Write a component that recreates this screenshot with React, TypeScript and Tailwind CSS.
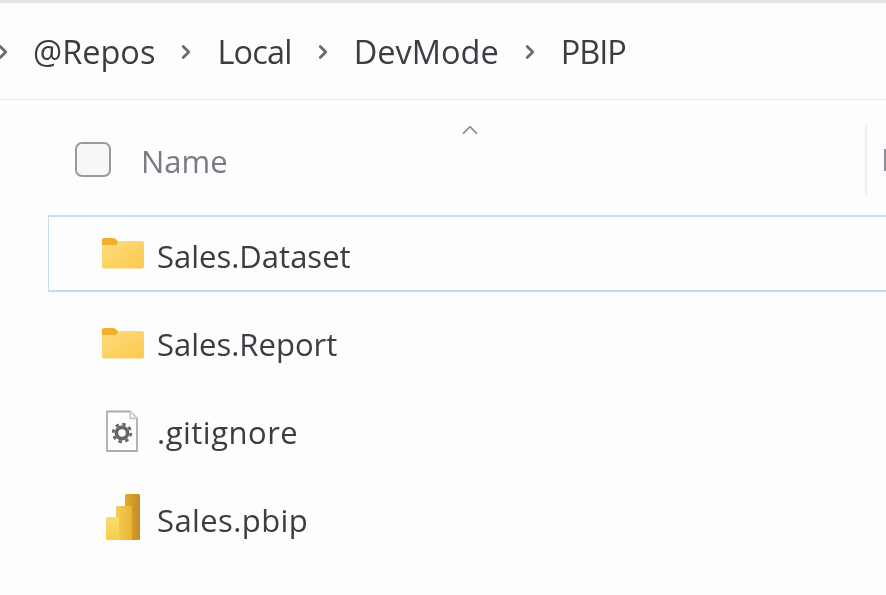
import { ChevronRight, ChevronUp } from "lucide-react";

const crumbs = [
  { name: "@Repos", fit: "" },
  { name: "Local", fit: "tracking-[-0.8px]" },
  { name: "DevMode", fit: "" },
  { name: "PBIP", fit: "tracking-[-1px]" },
];

function FolderIcon() {
  return (
    <svg width="44" height="34" viewBox="0 0 44 34" className="shrink-0">
      <defs>
        <linearGradient id="folderFill" x1="0" y1="0" x2="1" y2="1">
          <stop offset="0" stopColor="#fddc7c" />
          <stop offset="1" stopColor="#fbc94e" />
        </linearGradient>
      </defs>
      <path d="M1 3 Q1 1 3 1 H13 L17 4 V9 H1 Z" fill="#efb02c" />
      <path d="M1 8 H15 L18 4 H41 Q43 4 43 6 V29.5 Q43 31.5 41 31.5 H3 Q1 31.5 1 29.5 Z" fill="url(#folderFill)" />
    </svg>
  );
}

function GearFileIcon() {
  return (
    <svg width="36" height="44" viewBox="0 0 36 44" className="shrink-0">
      <path d="M3 1.5 H26 L33 8.5 V41 H3 Z" fill="#fdfdfd" stroke="#a9adb2" strokeWidth="1.8" strokeLinejoin="round" />
      <path d="M26 1.5 V8.5 H33" fill="#f2f2f3" stroke="#c2c5c8" strokeWidth="1.4" />
      <circle cx="18" cy="23" r="5.6" fill="none" stroke="#62666b" strokeWidth="3.6" />
      <circle cx="18" cy="23" r="8.8" fill="none" stroke="#62666b" strokeWidth="2.8" strokeDasharray="3.4 3.51" />
    </svg>
  );
}

function PbipIcon() {
  return (
    <svg width="36" height="48" viewBox="0 0 36 48" className="mb-[6px] shrink-0">
      <defs>
        <linearGradient id="barA" x1="0" y1="0" x2="0" y2="1">
          <stop offset="0" stopColor="#f9dc70" />
          <stop offset="1" stopColor="#f7cd4a" />
        </linearGradient>
        <linearGradient id="barB" x1="0" y1="0" x2="1" y2="0">
          <stop offset="0" stopColor="#f3cb55" />
          <stop offset="1" stopColor="#eab535" />
        </linearGradient>
        <linearGradient id="barC" x1="0" y1="0" x2="1" y2="0">
          <stop offset="0" stopColor="#e7ab22" />
          <stop offset="1" stopColor="#c08a28" />
        </linearGradient>
      </defs>
      <rect x="20" y="1" width="15" height="46" rx="1.5" fill="url(#barC)" />
      <rect x="11" y="13" width="16" height="34" rx="1.5" fill="url(#barB)" />
      <rect x="1" y="24" width="13" height="23" rx="1.5" fill="url(#barA)" />
    </svg>
  );
}

const rows = [
  { name: "Sales.Report", icon: <FolderIcon />, iconBox: "pl-[101px]", label: "ml-[12px]" },
  { name: ".gitignore", icon: <GearFileIcon />, iconBox: "pl-[104px]", label: "ml-[17px] tracking-[0.5px]" },
  { name: "Sales.pbip", icon: <PbipIcon />, iconBox: "pl-[105px]", label: "ml-[16px] tracking-[0.4px]" },
];

export default function App() {
  return (
    <div className="h-[595px] w-[886px] overflow-hidden bg-[#fdfdfd] font-['Open_Sans',sans-serif] text-[#3a3d41] blur-[0.5px]">
      <div className="h-[3px] bg-[#e4e4e6]" />
      <div className="flex h-[97px] items-center border-b border-b-[#e7e7e9] pt-[2px] text-[32.5px]">
        <ChevronRight size={22} strokeWidth={3} className="ml-[-8px] mr-[19px] text-[#666a6e]" />
        {crumbs.map((crumb, i) => (
          <div key={crumb.name} className="flex items-center">
            {i > 0 && <ChevronRight size={22} strokeWidth={3} className="mx-[20px] text-[#666a6e]" />}
            <span className={crumb.fit}>{crumb.name}</span>
          </div>
        ))}
      </div>

      <div className="flex h-[115px] items-start">
        <div className="relative flex h-[96px] flex-1 items-center pl-[75px] pt-[23px]">
          <ChevronUp size={26} strokeWidth={1.6} className="absolute left-[457px] top-[17px] text-[#85888c]" />
          <div className="h-[35px] w-[36px] rounded-[7px] border-2 border-[#9a9a9e] bg-[#f7f7f8]" />
          <span className="ml-[30px] pt-[3px] text-[31px] text-[#787b85]">Name</span>
        </div>
        <div className="mt-[25px] h-[70px] w-[2px] bg-[#eeeef0]" />
        <div className="ml-[17px] mt-[49px] h-[22px] w-[2px] bg-[#8f9197]" />
      </div>

      <div className="ml-[48px] flex h-[77px] items-center border-y-2 border-l border-[#c6dcec] pl-[52px] text-[31px]">
        <FolderIcon />
        <span className="ml-[12px] pt-[6px]">Sales.Dataset</span>
      </div>

      <div className="mt-[8px] flex flex-col">
        {rows.map((row) => (
          <div key={row.name} className={`flex h-[88px] items-center text-[31px] ${row.iconBox}`}>
            {row.icon}
            <span className={row.label}>{row.name}</span>
          </div>
        ))}
      </div>
    </div>
  );
}
